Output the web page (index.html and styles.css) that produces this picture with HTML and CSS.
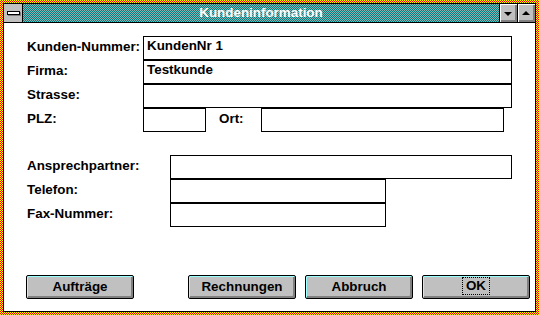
FILE: index.html
```html
<!DOCTYPE html>
<html lang="de">
<head>
    <meta charset="UTF-8">
    <title>Kundeninformation</title>
    <link rel="stylesheet" href="styles.css">
</head>
<body>
    <div class="frame">
        <div class="window">
            <div class="titlebar">
                <div class="sysmenu"><span class="sysbar"></span></div>
                <div class="title">Kundeninformation</div>
                <div class="tbtn"><span class="arrow-down"></span></div>
                <div class="tbtn"><span class="arrow-up"></span></div>
            </div>

            <div class="client">
                <div class="group">
                    <div class="row">
                        <label class="lbl w1">Kunden-Nummer:</label>
                        <div class="box big">KundenNr 1</div>
                    </div>
                    <div class="row">
                        <label class="lbl w1">Firma:</label>
                        <div class="box big">Testkunde</div>
                    </div>
                    <div class="row">
                        <label class="lbl w1">Strasse:</label>
                        <div class="box big"></div>
                    </div>
                    <div class="row">
                        <label class="lbl w1">PLZ:</label>
                        <div class="box plz"></div>
                        <label class="lbl ort">Ort:</label>
                        <div class="box city"></div>
                    </div>
                </div>

                <div class="group second">
                    <div class="row">
                        <label class="lbl w2">Ansprechpartner:</label>
                        <div class="box wide"></div>
                    </div>
                    <div class="row">
                        <label class="lbl w2">Telefon:</label>
                        <div class="box mid"></div>
                    </div>
                    <div class="row">
                        <label class="lbl w2">Fax-Nummer:</label>
                        <div class="box mid"></div>
                    </div>
                </div>

                <div class="buttons">
                    <button class="btn first">Aufträge</button>
                    <button class="btn">Rechnungen</button>
                    <button class="btn">Abbruch</button>
                    <button class="btn"><span class="focus">OK</span></button>
                </div>
            </div>
        </div>
    </div>
</body>
</html>
```

FILE: styles.css
```css
body {
    margin: 0;
    padding: 0;
    background-color: #fff;
    font-family: "Liberation Sans", Arial, sans-serif;
    font-size: 13.4px;
    font-weight: bold;
    color: #000;
}
.frame {
    width: 539px;
    height: 315px;
    box-sizing: border-box;
    padding: 3px;
    background: conic-gradient(#f00 25%, #ff0 0 50%, #f00 0 75%, #ff0 0) 0 0 / 2px 2px;
}
.window {
    height: 100%;
    box-sizing: border-box;
    border: 1px solid #000;
    background-color: #fff;
    display: flex;
    flex-direction: column;
}
.titlebar {
    display: flex;
    height: 18px;
    border-bottom: 1px solid #000;
    background: conic-gradient(#008080 25%, #8fb0b0 0 50%, #008080 0 75%, #8fb0b0 0) 0 0 / 2px 2px;
}
.sysmenu {
    width: 18px;
    background-color: #c0c0c0;
    border-right: 1px solid #000;
    display: flex;
    align-items: center;
    justify-content: center;
}
.sysbar {
    width: 11px;
    height: 2px;
    background-color: #fff;
    border: 1px solid #000;
    box-shadow: 1px 1px 0 #808080;
}
.title {
    flex: 1;
    text-align: center;
    color: #fff;
    line-height: 18px;
}
.tbtn {
    width: 17px;
    background-color: #c0c0c0;
    border-left: 1px solid #000;
    box-shadow: inset 1px 1px 0 #fff, inset -1px -1px 0 #808080, inset -2px -2px 0 #808080;
    display: flex;
    align-items: center;
    justify-content: center;
}
.arrow-down {
    border-left: 4px solid transparent;
    border-right: 4px solid transparent;
    border-top: 4px solid #000;
    margin: 1px 1px 0 0;
}
.arrow-up {
    border-left: 4px solid transparent;
    border-right: 4px solid transparent;
    border-bottom: 4px solid #000;
    margin: 0 1px 1px 0;
}
.client {
    flex: 1;
    display: flex;
    flex-direction: column;
    padding: 13px 0 12px 23px;
}
.row {
    display: flex;
    align-items: center;
    height: 24px;
}
.lbl {
    line-height: 20px;
    margin-top: -3px;
}
.w1 {
    width: 116px;
}
.w2 {
    width: 143px;
}
.ort {
    width: 42px;
    margin-left: 13px;
}
.box {
    height: 24px;
    box-sizing: border-box;
    border: 1px solid #000;
    padding-left: 3px;
    line-height: 18px;
}
.big {
    width: 369px;
}
.plz {
    width: 63px;
}
.city {
    width: 243px;
}
.wide {
    width: 342px;
}
.mid {
    width: 216px;
}
.second {
    margin-top: 23px;
}
.buttons {
    margin-top: auto;
    display: flex;
    gap: 9px;
    padding-right: 5px;
    margin-left: -1px;
}
.btn {
    width: 108px;
    height: 24px;
    font: inherit;
    color: #000;
    background-color: #c0c0c0;
    border: 1px solid #000;
    border-radius: 2px;
    box-shadow: inset 1px 1px 0 #9ff, inset -1px -1px 0 #808080, inset -2px -2px 0 #808080;
    padding: 0 0 2px 0;
}
.first {
    margin-right: auto;
}
.focus {
    display: inline-block;
    padding: 1px 3px;
    border: 1px dotted #000;
    line-height: 14px;
}
```
